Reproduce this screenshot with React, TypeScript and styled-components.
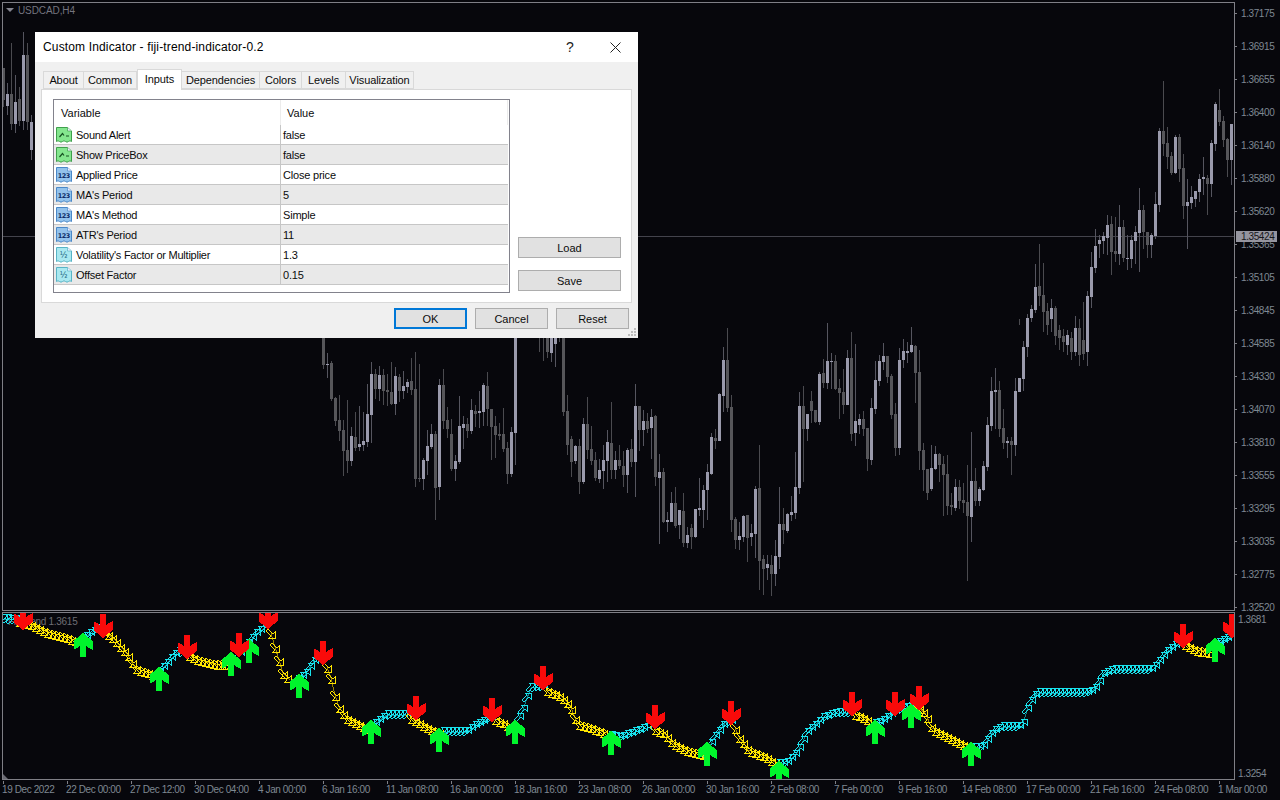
import React from "react";
import styled, { createGlobalStyle } from "styled-components";

const GlobalStyle = createGlobalStyle`
  html, body { margin: 0; padding: 0; background: #07070c; overflow: hidden; }
  #root { width: 1280px; height: 800px; }
`;

/* ---------- candle data: [bodyTop, bodyBottom, wickTop, wickBottom, dark] ---------- */
type Raw = [number, number, number, number, number];
type Candle = { x: number; t: number; b: number; wt: number; wb: number; dark: boolean };

const group = (x0: number, off: number, scale: number, rows: Raw[]): Candle[] =>
  rows.map((r, i) => ({
    x: x0 + 4 * i,
    t: Math.round(off + r[0] / scale),
    b: Math.round(off + r[1] / scale),
    wt: Math.round(off + r[2] / scale),
    wb: Math.round(off + r[3] / scale),
    dark: r[4] === 1,
  }));

const left: Raw[] = [
  [204, 300, 204, 320, 1], [282, 318, 250, 345, 0], [282, 372, 130, 390, 1], [306, 372, 225, 400, 0],
  [297, 363, 260, 378, 1], [165, 363, 97, 390, 0], [165, 366, 130, 390, 1], [366, 450, 345, 480, 0],
];
const midA: Raw[] = [
  [24,105,0,117,1],[102,105,69,144,0],[99,207,93,213,1],[204,273,201,288,1],[270,303,195,333,1],[300,363,270,438,1],
  [360,393,210,429,1],[318,393,291,408,0],[321,354,246,363,1],[342,351,228,363,0],[333,345,246,363,0],[252,336,162,351,0],
  [132,255,96,339,0],[132,177,117,207,1],[135,177,108,213,0],[135,183,117,225,1],[180,186,132,228,1],[186,222,96,225,1],
  [138,222,111,255,0],[141,183,132,216,1],[168,183,123,207,0],[156,171,147,189,0],[153,180,84,195,1],[177,447,66,471,1],
  [444,447,102,456,1],[390,447,384,480,0],[348,393,300,435,0],[312,351,282,357,0],[312,474,303,570,1],[165,471,147,510,0],
  [165,273,117,297,1],[270,297,231,324,1],[312,417,267,423,1],[393,417,375,453,0],[288,396,198,402,0],[282,294,258,357,0],
  [282,303,264,324,1],[240,303,207,312,0],[243,252,225,291,1],[243,249,183,294,0],[165,246,159,288,0],[168,237,126,288,1],
  [237,291,237,390,1],[288,315,258,384,1],[312,318,279,330,1],[312,357,234,366,1],[354,432,336,462,1],[306,432,291,441,0],
  [24,309,0,405,0],
];
const midB: Raw[] = [
  [0,0,0,66,1],[0,0,0,93,1],[0,66,0,84,1],[0,69,0,96,0],[0,42,0,111,0],[0,0,0,36,1],
  [24,246,0,258,1],[243,345,195,375,1],[327,396,318,441,1],[348,393,345,402,0],[348,456,327,492,1],[282,456,264,462,0],
  [282,360,201,387,1],[357,393,288,405,1],[390,444,366,453,1],[420,447,387,459,0],[390,423,345,477,0],[336,393,300,456,0],
  [339,420,216,447,1],[390,420,363,447,0],[390,408,345,417,1],[408,435,363,471,1],[360,435,354,489,0],[357,396,327,411,1],
  [228,396,162,501,0],[228,300,228,363,1],
];
const midC: Raw[] = [
  [303,330,270,378,0],[303,327,280,340,1],[291,324,267,417,0],[288,471,285,498,1],[456,474,402,672,0],[456,606,444,609,1],
  [600,606,576,636,0],[549,606,516,606,0],[549,618,501,624,1],[570,615,570,657,0],[573,669,519,681,1],[645,669,621,684,0],
  [624,651,612,687,1],[567,651,567,654,0],[564,570,474,588,0],[510,570,495,624,0],[456,510,432,600,0],[351,462,339,465,0],
  [354,363,327,387,1],[222,363,219,363,0],[120,228,81,276,0],[120,264,24,276,1],[261,600,225,636,1],[597,660,591,687,1],
  [648,660,606,690,0],[588,651,585,666,0],[585,654,585,726,1],[639,651,612,678,0],[507,642,498,714,0],[504,723,375,810,1],
  [717,747,705,825,1],[732,744,705,780,0],[735,762,705,828,1],[708,762,660,798,0],[612,711,501,747,0],[612,630,564,672,1],
  [582,633,579,639,0],[576,585,528,603,0],[501,579,396,597,0],[258,504,216,522,0],[258,327,198,486,1],[282,327,282,363,0],
  [243,273,213,309,1],[270,306,270,309,1],[162,306,156,315,0],[159,189,117,204,1],[123,189,9,207,0],[123,126,99,207,0],
  [123,207,105,210,1],[204,219,177,297,1],[216,255,147,282,1],[114,255,90,255,0],[114,342,36,363,1],[303,339,72,378,0],
  [297,315,282,342,0],[297,327,273,348,1],[324,417,324,453,1],[264,420,234,435,0],[180,267,123,282,0],[123,183,105,198,0],
  [108,126,69,150,0],[108,171,108,189,1],[168,285,162,297,1],[282,384,249,408,1],[120,384,84,405,0],[93,120,57,144,0],
  [93,99,66,129,0],[75,96,21,99,0],[78,159,75,249,1],[156,393,90,450,1],[390,450,369,513,1],[447,519,447,540,1],
  [444,507,375,513,0],[402,447,378,450,0],[402,435,399,486,1],[432,465,408,588,1],[462,558,405,585,1],[555,561,519,585,1],
  [501,564,477,573,0],[501,543,480,567,1],[540,549,489,579,1],[546,588,435,783,1],[483,591,336,666,0],[483,543,444,558,1],
  [507,543,501,558,0],[438,510,423,513,0],[315,441,291,453,0],[213,318,171,333,0],[210,216,144,327,0],[210,327,183,351,1],
  [324,369,267,387,1],[363,369,351,414,0],[363,375,351,465,1],[213,375,174,408,0],[174,216,174,216,0],[81,177,63,213,0],
  [-6,81,-18,110,0],
];
const midD: Raw[] = [
  [309,318,305,322,0],[287,310,264,313,0],[286,296,244,306,1],[295,312,263,332,1],[311,325,303,335,1],[308,319,299,332,0],
  [308,336,306,345,1],[330,338,325,350,1],[336,342,329,352,1],[335,345,330,355,0],[338,352,332,360,1],[328,352,316,356,0],
  [328,355,319,366,1],[340,354,302,360,1],[296,352,291,366,0],[267,297,252,308,0],[246,268,229,273,0],[240,244,235,258,0],
];
const right: Raw[] = [
  [708,722,697,762,0],[676,714,645,765,0],[672,756,648,825,1],[753,762,651,786,1],[681,762,615,795,0],[681,774,660,785,1],
  [774,777,705,810,0],[720,777,705,804,0],[696,723,678,792,0],[630,699,564,816,0],[630,696,615,747,1],[696,735,696,774,1],
  [705,735,699,774,0],[612,708,576,717,0],[393,615,384,636,0],[393,432,243,468,1],[429,471,381,507,1],[468,519,456,525,1],
  [411,519,405,522,0],[411,507,402,546,1],[504,618,462,657,1],[606,618,537,747,0],[591,609,558,627,0],[573,597,573,621,0],
  [537,576,522,606,0],[531,537,471,585,0],[534,552,525,645,1],[429,552,420,591,0],[312,432,306,453,0],[330,366,267,378,1],
  [363,420,348,441,1],[417,480,414,531,1],[372,480,372,555,0],
];

const candles: Candle[] = [
  ...group(3, 0, 3, left),
  ...group(323, 330, 3, midA),
  ...group(539, 330, 3, midB),
  ...group(643, 320, 3, midC),
  ...group(1031, 0, 1, midD),
  ...group(1103, 0, 3, right),
];

/* ---------- indicator data ---------- */
type Seg = { up: boolean; pts: number[][] };
const segs: Seg[] = [
  { up: true, pts: [[3,619],[17,620]] },
  { up: false, pts: [[19,621],[30,624],[45,631],[60,635],[78,641]] },
  { up: true, pts: [[82,640],[90,634],[100,628]] },
  { up: false, pts: [[104,630],[115,640],[128,655],[135,668],[150,673],[155,675]] },
  { up: true, pts: [[159,673],[170,660],[178,652],[185,653]] },
  { up: false, pts: [[189,655],[200,660],[215,664],[230,664]] },
  { up: true, pts: [[240,654],[255,635],[266,627]] },
  { up: false, pts: [[271,633],[275,647],[279,660],[283,673],[290,680]] },
  { up: true, pts: [[298,680],[305,675],[315,660],[321,655]] },
  { up: false, pts: [[327,667],[331,678],[335,695],[339,707],[347,718],[357,723],[368,728]] },
  { up: true, pts: [[371,728],[380,720],[387,715],[407,715]] },
  { up: false, pts: [[411,718],[420,723],[433,730],[439,732]] },
  { up: true, pts: [[443,732],[467,732],[480,723],[491,718]] },
  { up: false, pts: [[495,719],[503,722],[511,727]] },
  { up: true, pts: [[519,718],[523,710],[527,698],[531,688],[543,687]] },
  { up: false, pts: [[547,690],[560,695],[570,705],[577,723],[593,728],[607,733]] },
  { up: true, pts: [[611,736],[620,738],[633,733],[650,727]] },
  { up: false, pts: [[655,729],[663,732],[673,743],[687,750],[703,754]] },
  { up: true, pts: [[707,753],[713,740],[725,723],[731,722]] },
  { up: false, pts: [[735,728],[739,737],[743,742],[748,750],[763,755],[775,762]] },
  { up: true, pts: [[779,764],[787,763],[797,753],[807,733],[823,718],[837,713],[851,713]] },
  { up: false, pts: [[855,714],[860,715],[873,723]] },
  { up: true, pts: [[875,724],[882,722],[897,710],[910,707],[915,707]] },
  { up: false, pts: [[919,708],[925,713],[932,728],[950,737],[970,747]] },
  { up: true, pts: [[975,748],[983,747],[993,732],[1003,727],[1022,727],[1028,707],[1037,693],[1090,693],[1097,687],[1103,675],[1113,670],[1153,670],[1167,652],[1181,642]] },
  { up: false, pts: [[1185,644],[1197,650],[1211,652]] },
  { up: true, pts: [[1215,645],[1223,641],[1231,637]] },
];

const smallArrows = segs.flatMap((s) => {
  const out: { x: number; y: number; up: boolean }[] = [];
  const x0 = s.pts[0][0];
  const x1 = s.pts[s.pts.length - 1][0];
  for (let x = x0; x <= x1; x += 4) {
    let y = s.pts[0][1];
    for (let i = 0; i < s.pts.length - 1; i++) {
      const [ax, ay] = s.pts[i];
      const [bx, by] = s.pts[i + 1];
      if (x >= ax && x <= bx) y = ay + ((by - ay) * (x - ax)) / Math.max(1, bx - ax);
    }
    out.push({ x, y: Math.round(y), up: s.up });
  }
  return out;
});

const greens = [[83,633],[159,667],[249,639],[231,652],[299,674],[371,720],[439,728],[515,720],[611,731],[707,742],[779,761],[875,720],[911,704],[971,742],[1215,638]];
const reds = [[23,630],[103,638],[187,659],[239,657],[268,629],[323,665],[416,720],[492,722],[543,690],[655,729],[731,725],[852,716],[895,716],[919,710],[1183,648],[1232,638]];

/* ---------- styled parts ---------- */
const Page = styled.div`
  position: relative;
  width: 1280px;
  height: 800px;
  box-sizing: border-box;
  padding: 2px 0 0 2px;
  display: grid;
  grid-template-columns: 1233px 1fr;
  grid-template-rows: 609px 168px 1fr;
  row-gap: 1px;
  background: #07070c;
  overflow: hidden;
  font-family: "Liberation Sans", Arial, sans-serif;
`;
const Pane = styled.div`
  position: relative;
  box-sizing: border-box;
  border: 1px solid #7f7f86;
  overflow: hidden;
  svg { display: block; }
`;
const SymbolLabel = styled.div`
  position: absolute;
  left: 3px;
  top: 0;
  display: flex;
  align-items: center;
  gap: 4px;
  height: 14px;
  color: #74747f;
  font-size: 10px;
  letter-spacing: -0.1px;
`;
const DownMark = styled.span`
  width: 0;
  height: 0;
  border-left: 4px solid transparent;
  border-right: 4px solid transparent;
  border-top: 4px solid #85858f;
`;
const Legend = styled.div`
  position: absolute;
  left: 5px;
  top: 2px;
  color: #6e6e74;
  font-size: 10px;
  line-height: 13px;
  letter-spacing: -0.3px;
`;
const Corner = styled.span`
  position: absolute;
  left: 0;
  bottom: 0;
  width: 0;
  height: 0;
  border-bottom: 5px solid #6a6a72;
  border-right: 5px solid transparent;
`;
const PriceAxis = styled.div`
  position: relative;
  margin-top: -5px;
  display: flex;
  flex-direction: column;
  height: 627px;
`;
const PriceRow = styled.div`
  flex: 0 0 33px;
  display: flex;
  align-items: center;
  gap: 4px;
  color: #7f8892;
  font-size: 10px;
  letter-spacing: -0.4px;
  &::before {
    content: "";
    width: 2px;
    height: 1px;
    background: #7f7f86;
  }
`;
const CurrentPrice = styled.div`
  position: absolute;
  left: 1px;
  top: 234px;
  width: 36px;
  height: 11px;
  padding-left: 5px;
  background: #95959f;
  color: #17171b;
  font-size: 10px;
  line-height: 11px;
  letter-spacing: -0.4px;
`;
const SubAxis = styled.div`
  display: flex;
  flex-direction: column;
  justify-content: space-between;
  padding: 1px 0 0 3px;
  height: 168px;
  box-sizing: border-box;
  color: #7f8892;
  font-size: 10px;
  letter-spacing: -0.4px;
  line-height: 13px;
`;
const TimeAxis = styled.div`
  grid-column: 1 / span 2;
  margin-left: -2px;
  width: 1280px;
  display: flex;
`;
const TimeCell = styled.div`
  position: relative;
  flex: 0 0 64px;
  padding: 2px 0 0 2px;
  box-sizing: border-box;
  white-space: nowrap;
  color: #7f8892;
  font-size: 10px;
  line-height: 13px;
  letter-spacing: -0.4px;
  &::before {
    content: "";
    position: absolute;
    left: 3px;
    top: 0;
    width: 1px;
    height: 3px;
    background: #7f7f86;
  }
`;

const Dialog = styled.div`
  position: absolute;
  left: 35px;
  top: 32px;
  width: 603px;
  height: 306px;
  background: #f0f0f0;
  display: flex;
  flex-direction: column;
  font-family: "Liberation Sans", Arial, sans-serif;
  font-size: 11px;
  color: #0c0c0c;
`;
const TitleBar = styled.div`
  flex: 0 0 30px;
  background: #fff;
  display: flex;
  align-items: center;
  padding-left: 8px;
  font-size: 12px;
  letter-spacing: 0.15px;
  color: #000;
`;
const TitleText = styled.span`
  flex: 1;
`;
const HelpMark = styled.span`
  width: 46px;
  text-align: center;
  font-size: 14px;
  color: #222;
`;
const CloseBtn = styled.span`
  width: 45px;
  display: flex;
  justify-content: center;
  svg { display: block; }
`;
const TabStrip = styled.div`
  display: flex;
  height: 20px;
  margin: 7px 0 0 8px;
  position: relative;
  z-index: 1;
  letter-spacing: -0.1px;
`;
const Tab = styled.div<{ $w: number; $active?: boolean }>`
  box-sizing: border-box;
  width: ${(p) => p.$w}px;
  height: ${(p) => (p.$active ? "21px" : "18px")};
  margin-top: ${(p) => (p.$active ? "0" : "2px")};
  background: ${(p) => (p.$active ? "#fff" : "#f0f0f0")};
  border: 1px solid #d9d9d9;
  border-bottom: ${(p) => (p.$active ? "none" : "1px solid #d9d9d9")};
  border-left-width: ${(p) => (p.$active ? "1px" : "0")};
  display: flex;
  align-items: center;
  justify-content: center;
  padding-bottom: ${(p) => (p.$active ? "2px" : "0")};
  &:first-child { border-left-width: 1px; }
`;
const TabPanel = styled.div`
  box-sizing: border-box;
  margin-left: 6px;
  width: 591px;
  height: 214px;
  border: 1px solid #d9d9d9;
  background: #fff;
  padding: 9px 0 0 11px;
  display: flex;
  gap: 8px;
`;
const InputTable = styled.div`
  box-sizing: border-box;
  width: 457px;
  height: 194px;
  border: 1px solid #82828c;
  padding-right: 1px;
`;
const HeadRow = styled.div`
  display: grid;
  grid-template-columns: 227px 1fr;
  height: 25px;
  align-items: center;
`;
const HeadCell = styled.div<{ $pad: number }>`
  padding-left: ${(p) => p.$pad}px;
  height: 100%;
  display: flex;
  align-items: center;
  border-right: 1px solid #ececec;
  box-sizing: border-box;
`;
const Row = styled.div<{ $alt: boolean }>`
  display: grid;
  grid-template-columns: 227px 1fr;
  height: 20px;
  box-sizing: border-box;
  background: ${(p) => (p.$alt ? "#e9e9e9" : "#fff")};
  border-bottom: 1px solid #c6c6c6;
`;
const NameCell = styled.div`
  box-sizing: border-box;
  display: flex;
  align-items: center;
  gap: 4px;
  padding-left: 2px;
  border-right: 1px solid #c6c6c6;
  white-space: nowrap;
  letter-spacing: -0.24px;
`;
const ValueCell = styled.div`
  display: flex;
  align-items: center;
  padding-left: 2px;
  letter-spacing: -0.2px;
`;
const SideCol = styled.div`
  width: 103px;
  height: 192px;
  display: flex;
  flex-direction: column;
  justify-content: flex-end;
  gap: 12px;
`;
const Button = styled.div<{ $w: number; $default?: boolean }>`
  box-sizing: border-box;
  width: ${(p) => p.$w}px;
  height: 21px;
  display: flex;
  align-items: center;
  justify-content: center;
  background: #e1e1e1;
  border: ${(p) => (p.$default ? "2px solid #0078d7" : "1px solid #adadad")};
`;
const FootRow = styled.div`
  display: flex;
  justify-content: flex-end;
  gap: 8px;
  margin-top: 5px;
  padding-right: 9px;
`;
const Grip = styled.svg`
  position: absolute;
  right: 1px;
  bottom: 1px;
`;

/* ---------- icons ---------- */
const docPath = "M0.5 0.5H11.5L15.5 4V14.5Q14 13 12.5 14.5Q11 15.8 9.5 14.5Q8 13 6.5 14.5Q5 15.8 3.5 14.5Q2 13 0.5 14.5Z";
const ParamIcon = ({ kind }: { kind: "bool" | "int" | "dbl" }) => {
  const c = {
    bool: { fill: "#84e68e", stroke: "#3fa04c" },
    int: { fill: "#92c2ec", stroke: "#4a88c8" },
    dbl: { fill: "#a9e8f0", stroke: "#58b4c6" },
  }[kind];
  return (
    <svg width="16" height="16" viewBox="0 0 16 16" style={{ flex: "none" }}>
      <path d={docPath} fill={c.fill} stroke={c.stroke} />
      <path d="M11.5 0.5V4H15.5" fill="#eef" stroke={c.stroke} strokeWidth="0.7" />
      {kind === "bool" && <path d="M3.5 10L6.5 6.5L8 8.5M10 9H13" fill="none" stroke="#14501f" strokeWidth="1.2" />}
      {kind === "int" && (
        <text x="7.8" y="11" textAnchor="middle" fontFamily="DejaVu Sans" fontWeight="700" fontSize="6.5" letterSpacing="-0.5" fill="#0e2f6a">123</text>
      )}
      {kind === "dbl" && (
        <text x="7.5" y="11" textAnchor="middle" fontFamily="DejaVu Sans" fontSize="8" letterSpacing="-0.5" fill="#14607a">½</text>
      )}
    </svg>
  );
};

const arrowUp = "M0 0L9.5 8V17L3 13V24H-3V13L-9.5 17V8Z";
const arrowDown = "M0 0L9.5 -8V-17L3 -13V-24H-3V-13L-9.5 -17V-8Z";

const rows: { name: string; value: string; kind: "bool" | "int" | "dbl" }[] = [
  { name: "Sound Alert", value: "false", kind: "bool" },
  { name: "Show PriceBox", value: "false", kind: "bool" },
  { name: "Applied Price", value: "Close price", kind: "int" },
  { name: "MA's Period", value: "5", kind: "int" },
  { name: "MA's Method", value: "Simple", kind: "int" },
  { name: "ATR's Period", value: "11", kind: "int" },
  { name: "Volatility's Factor or Multiplier", value: "1.3", kind: "dbl" },
  { name: "Offset Factor", value: "0.15", kind: "dbl" },
];
const tabs: [string, number][] = [
  ["About", 41], ["Common", 53], ["Inputs", 45], ["Dependencies", 78], ["Colors", 42], ["Levels", 44], ["Visualization", 68],
];
const prices = ["1.37175","1.36915","1.36655","1.36400","1.36140","1.35880","1.35620","1.35365","1.35105","1.34845","1.34585","1.34330","1.34070","1.33810","1.33555","1.33295","1.33035","1.32775","1.32520"];
const times = ["19 Dec 2022","22 Dec 00:00","27 Dec 12:00","30 Dec 04:00","4 Jan 00:00","6 Jan 16:00","11 Jan 08:00","16 Jan 00:00","18 Jan 16:00","23 Jan 08:00","26 Jan 00:00","30 Jan 16:00","2 Feb 08:00","7 Feb 00:00","9 Feb 16:00","14 Feb 08:00","17 Feb 00:00","21 Feb 16:00","24 Feb 08:00","1 Mar 00:00"];

export default function App() {
  return (
    <>
      <GlobalStyle />
      <Page>
        <Pane>
          <svg width="1231" height="607" viewBox="3 3 1231 607" shapeRendering="crispEdges">
            <rect x="3" y="236" width="1231" height="1" fill="#43434c" />
            {candles.map((c, i) => (
              <g key={i}>
                <rect x={c.x} y={c.wt} width="1" height={Math.max(0, c.wb - c.wt)} fill={c.dark ? "#4a4a4f" : "#55555f"} />
                {c.b > c.t && <rect x={c.x - 1} y={c.t} width="3" height={c.b - c.t} fill={c.dark ? "#56565a" : "#9a9aac"} />}
              </g>
            ))}
            <rect x="1019" y="319" width="1" height="6" fill="#4a4a4f" />
          </svg>
          <SymbolLabel><DownMark />USDCAD,H4</SymbolLabel>
        </Pane>
        <PriceAxis>
          {prices.map((p) => <PriceRow key={p}>{p}</PriceRow>)}
          <CurrentPrice>1.35424</CurrentPrice>
        </PriceAxis>
        <Pane>
          <Legend>Fiji Trend 1.3615</Legend>
          <svg width="1231" height="166" viewBox="3 613 1231 166" shapeRendering="crispEdges" style={{ position: "relative" }}>
            {segs.map((s, i) => (
              <polyline key={i} points={s.pts.map((p) => p.join(",")).join(" ")} fill="none" stroke={s.up ? "#0f7f8c" : "#9a8400"} strokeWidth="1" />
            ))}
            {smallArrows.map((a, i) => (
              <polygon
                key={i}
                transform={`translate(${a.x - 5} ${a.y - 5})${a.up ? "" : " translate(0 10) scale(1 -1)"}`}
                points="3,0 9,0 9,6 7,4 2,9 0,7 5,2"
                fill="none"
                stroke={a.up ? "#19e3ee" : "#ffe600"}
                strokeWidth="1"
              />
            ))}
            {greens.map(([x, y]) => <path key={x} transform={`translate(${x} ${y})`} d={arrowUp} fill="#00f52c" />)}
            {reds.map(([x, y]) => <path key={x} transform={`translate(${x} ${y})`} d={arrowDown} fill="#f90a0a" />)}
          </svg>
          <Corner />
        </Pane>
        <SubAxis><span>1.3681</span><span>1.3254</span></SubAxis>
        <TimeAxis>
          {times.map((t) => <TimeCell key={t}>{t}</TimeCell>)}
        </TimeAxis>

        <Dialog>
          <TitleBar>
            <TitleText>Custom Indicator - fiji-trend-indicator-0.2</TitleText>
            <HelpMark>?</HelpMark>
            <CloseBtn>
              <svg width="11" height="11" viewBox="0 0 11 11"><path d="M0.5 0.5L10.5 10.5M10.5 0.5L0.5 10.5" stroke="#222" strokeWidth="1" /></svg>
            </CloseBtn>
          </TitleBar>
          <TabStrip>
            {tabs.map(([t, w]) => <Tab key={t} $w={w} $active={t === "Inputs"}>{t}</Tab>)}
          </TabStrip>
          <TabPanel>
            <InputTable>
              <HeadRow>
                <HeadCell $pad={7}>Variable</HeadCell>
                <HeadCell $pad={6}>Value</HeadCell>
              </HeadRow>
              {rows.map((r, i) => (
                <Row key={r.name} $alt={i % 2 === 1}>
                  <NameCell><ParamIcon kind={r.kind} />{r.name}</NameCell>
                  <ValueCell>{r.value}</ValueCell>
                </Row>
              ))}
            </InputTable>
            <SideCol>
              <Button $w={103}>Load</Button>
              <Button $w={103}>Save</Button>
            </SideCol>
          </TabPanel>
          <FootRow>
            <Button $w={73} $default>OK</Button>
            <Button $w={73}>Cancel</Button>
            <Button $w={73}>Reset</Button>
          </FootRow>
          <Grip width="9" height="9" viewBox="0 0 9 9">
            <path d="M6 0h2v2H6zM3 3h2v2H3zM6 3h2v2H6zM0 6h2v2H0zM3 6h2v2H3zM6 6h2v2H6z" fill="#bcbcbc" />
          </Grip>
        </Dialog>
      </Page>
    </>
  );
}
